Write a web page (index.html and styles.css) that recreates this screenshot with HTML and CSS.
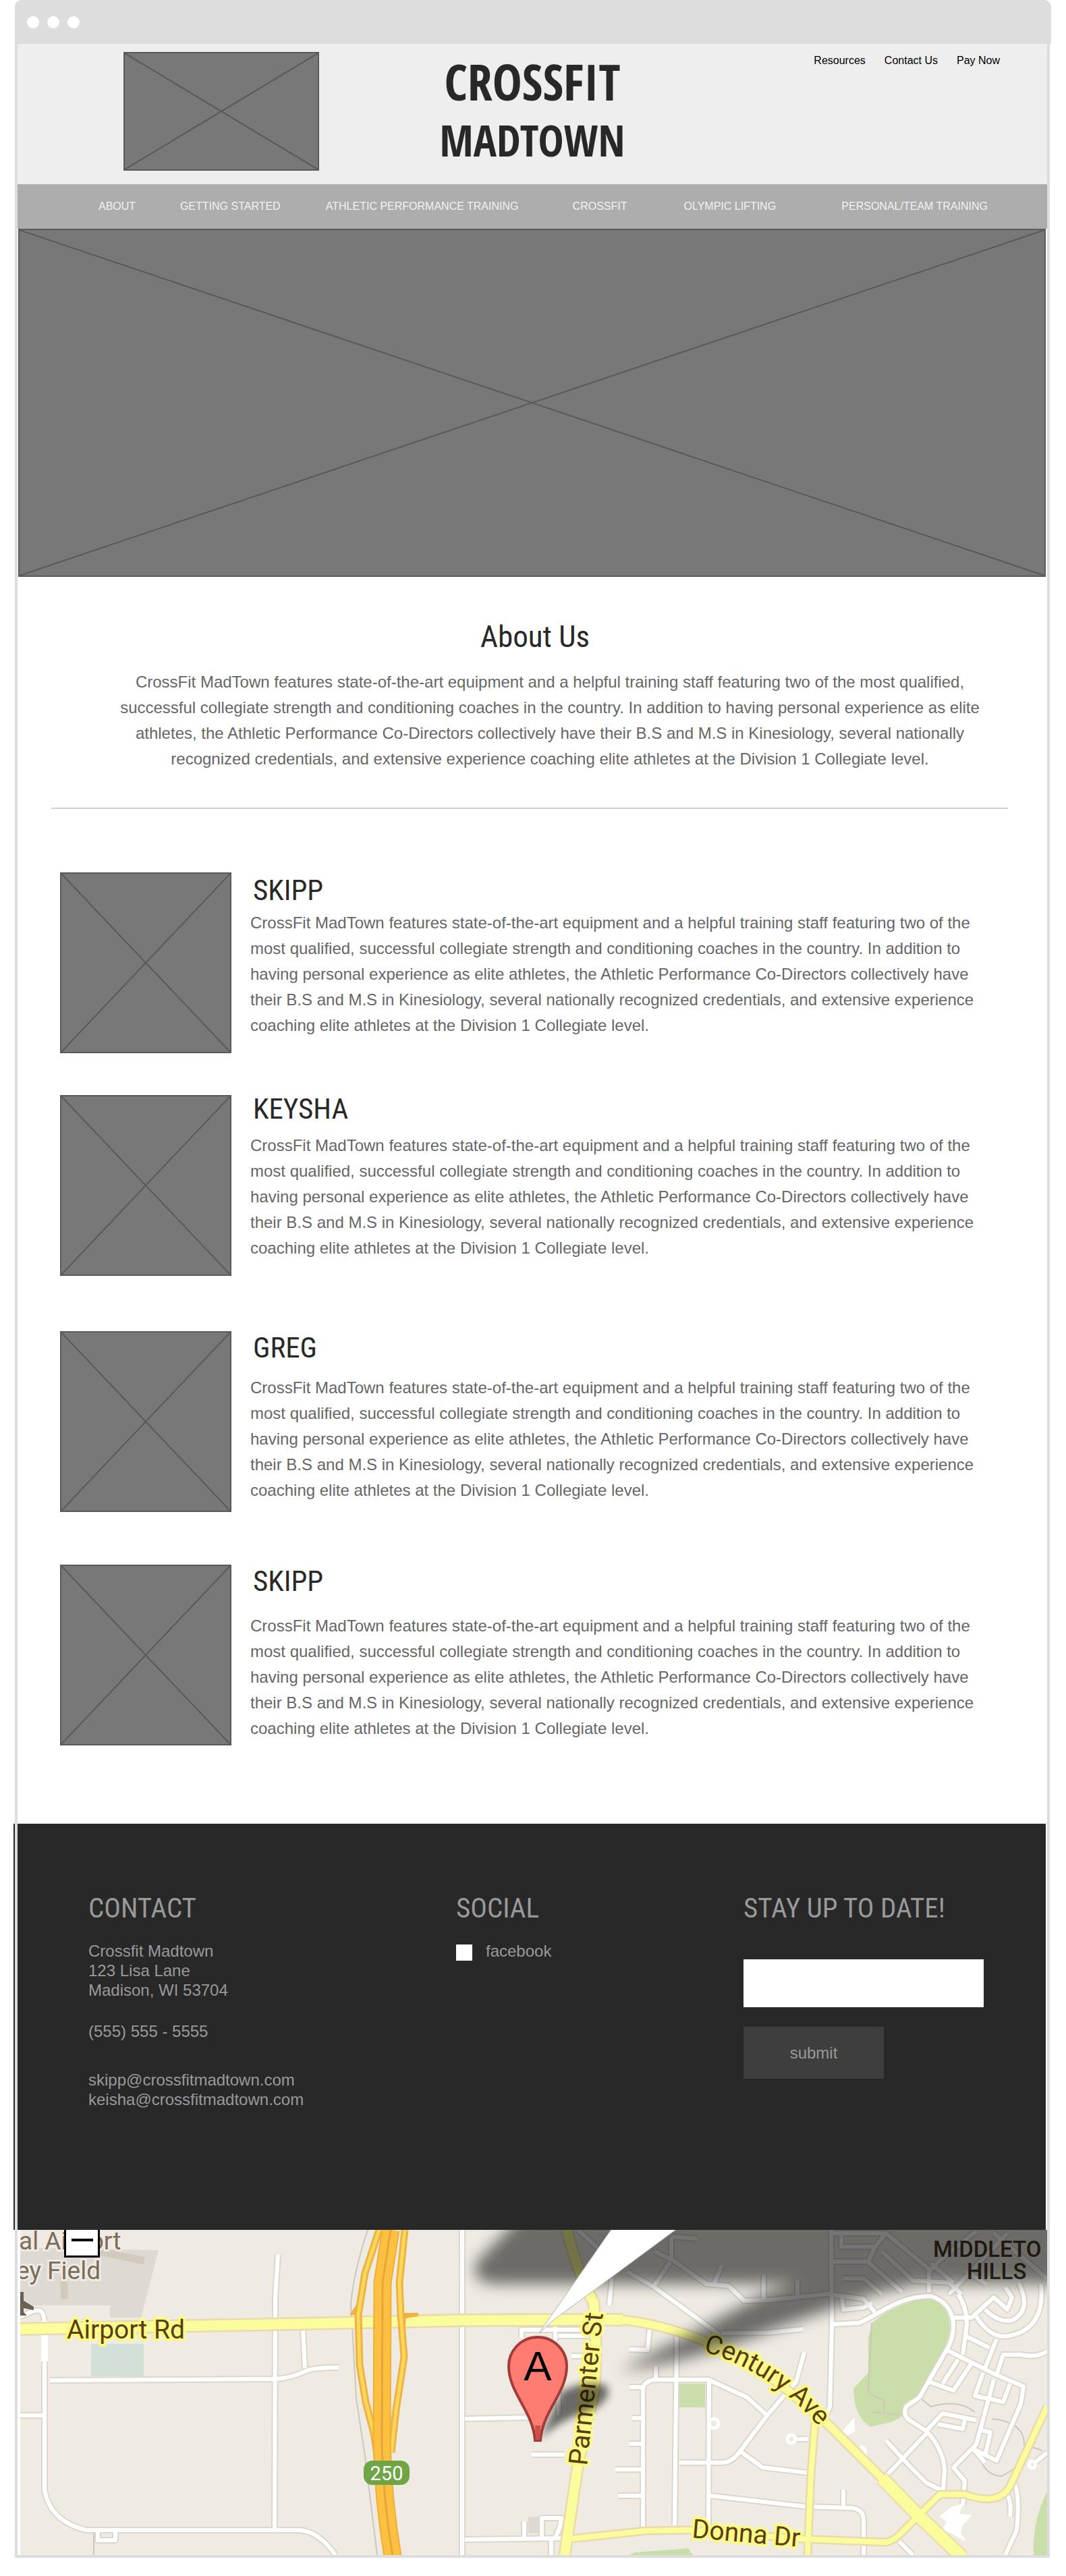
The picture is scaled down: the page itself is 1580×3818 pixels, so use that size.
FILE: index.html
```html
<!DOCTYPE html>
<html lang="en">
<head>
<meta charset="utf-8">
<meta name="viewport" content="width=device-width, initial-scale=1">
<title>CrossFit Madtown – About Us</title>
<link rel="stylesheet" href="styles.css">
</head>
<body>
<div class="window">
  <div class="chrome"><span class="dot"></span><span class="dot"></span><span class="dot"></span></div>
  <div class="frame">
    <header class="header">
      <svg class="placeholder header-image" viewBox="0 0 100 100" preserveAspectRatio="none" aria-hidden="true"><path d="M0 0L100 100M100 0L0 100"/></svg>
      <div class="logo"><span>CROSSFIT</span><span class="logo-second">MADTOWN</span></div>
      <nav class="top-links">
        <a href="#resources">Resources</a>
        <a href="#contact">Contact Us</a>
        <a href="#pay">Pay Now</a>
      </nav>
    </header>
    <nav class="main-nav">
      <a href="#about">ABOUT</a>
      <a href="#start">GETTING STARTED</a>
      <a href="#athletic">ATHLETIC PERFORMANCE TRAINING</a>
      <a href="#crossfit">CROSSFIT</a>
      <a href="#lifting">OLYMPIC LIFTING</a>
      <a href="#personal">PERSONAL/TEAM TRAINING</a>
    </nav>
    <svg class="placeholder hero" viewBox="0 0 100 100" preserveAspectRatio="none" aria-hidden="true"><path d="M0 0L100 100M100 0L0 100"/></svg>

    <main>
      <section class="about" id="about">
        <h1 class="about-title">About Us</h1>
        <p class="about-text">CrossFit MadTown features state-of-the-art equipment and a helpful training staff featuring two of the most qualified, successful collegiate strength and conditioning coaches in the country. In addition to having personal experience as elite athletes, the Athletic Performance Co-Directors collectively have their B.S and M.S in Kinesiology, several nationally recognized credentials, and extensive experience coaching elite athletes at the Division 1 Collegiate level.</p>
      </section>
      <hr class="rule">
      <section class="team">
        <article class="member">
          <svg class="placeholder portrait" viewBox="0 0 100 100" preserveAspectRatio="none" aria-hidden="true"><path d="M0 0L100 100M100 0L0 100"/></svg>
          <div class="bio">
            <h2 class="name">SKIPP</h2>
            <p>CrossFit MadTown features state-of-the-art equipment and a helpful training staff featuring two of the most qualified, successful collegiate strength and conditioning coaches in the country. In addition to having personal experience as elite athletes, the Athletic Performance Co-Directors collectively have their B.S and M.S in Kinesiology, several nationally recognized credentials, and extensive experience coaching elite athletes at the Division 1 Collegiate level.</p>
          </div>
        </article>
        <article class="member member-raised">
          <svg class="placeholder portrait" viewBox="0 0 100 100" preserveAspectRatio="none" aria-hidden="true"><path d="M0 0L100 100M100 0L0 100"/></svg>
          <div class="bio">
            <h2 class="name">KEYSHA</h2>
            <p>CrossFit MadTown features state-of-the-art equipment and a helpful training staff featuring two of the most qualified, successful collegiate strength and conditioning coaches in the country. In addition to having personal experience as elite athletes, the Athletic Performance Co-Directors collectively have their B.S and M.S in Kinesiology, several nationally recognized credentials, and extensive experience coaching elite athletes at the Division 1 Collegiate level.</p>
          </div>
        </article>
        <article class="member member-open">
          <svg class="placeholder portrait" viewBox="0 0 100 100" preserveAspectRatio="none" aria-hidden="true"><path d="M0 0L100 100M100 0L0 100"/></svg>
          <div class="bio">
            <h2 class="name">GREG</h2>
            <p>CrossFit MadTown features state-of-the-art equipment and a helpful training staff featuring two of the most qualified, successful collegiate strength and conditioning coaches in the country. In addition to having personal experience as elite athletes, the Athletic Performance Co-Directors collectively have their B.S and M.S in Kinesiology, several nationally recognized credentials, and extensive experience coaching elite athletes at the Division 1 Collegiate level.</p>
          </div>
        </article>
        <article class="member member-wide">
          <svg class="placeholder portrait" viewBox="0 0 100 100" preserveAspectRatio="none" aria-hidden="true"><path d="M0 0L100 100M100 0L0 100"/></svg>
          <div class="bio">
            <h2 class="name">SKIPP</h2>
            <p>CrossFit MadTown features state-of-the-art equipment and a helpful training staff featuring two of the most qualified, successful collegiate strength and conditioning coaches in the country. In addition to having personal experience as elite athletes, the Athletic Performance Co-Directors collectively have their B.S and M.S in Kinesiology, several nationally recognized credentials, and extensive experience coaching elite athletes at the Division 1 Collegiate level.</p>
          </div>
        </article>
      </section>
    </main>

    <footer class="footer" id="contact">
      <section>
        <h2 class="footer-title">CONTACT</h2>
        <address class="contact">
          <p>Crossfit Madtown<br>123 Lisa Lane<br>Madison, WI 53704</p>
          <p class="phone">(555) 555 - 5555</p>
          <p><a href="mailto:skipp@crossfitmadtown.com">skipp@crossfitmadtown.com</a><br><a href="mailto:keisha@crossfitmadtown.com">keisha@crossfitmadtown.com</a></p>
        </address>
      </section>
      <section>
        <h2 class="footer-title">SOCIAL</h2>
        <a class="social" href="#facebook"><span class="social-icon"></span>facebook</a>
      </section>
      <form class="signup">
        <h2 class="footer-title"><label for="email">STAY UP TO DATE!</label></h2>
        <input class="field" id="email" type="email">
        <button class="submit" type="button">submit</button>
      </form>
    </footer>

    <div class="map">
      <svg class="map-art" viewBox="0 0 1522 482" role="img" aria-label="Map of the gym on Parmenter St">
        <defs>
          <filter id="soft" x="-10%" y="-30%" width="120%" height="160%"><feGaussianBlur stdDeviation="11"/></filter>
          <filter id="soft-pin" x="-30%" y="-30%" width="160%" height="160%"><feGaussianBlur stdDeviation="6"/></filter>
          <g id="streets">
            <path d="M0 128C10 127 20 116 30 120Q37 124 36 150V385Q44 432 98 445H415Q444 448 467 482M382 37L378 100L377 445M44 223L378 221Q400 220 424 209Q435 204 472 204M419 147L422 205M0 275H36M655 0V482M659 280L760 278M659 459L803 457M115 447V460H141V447"/>
            <path d="M747 432V457M773 457V427H802L800 440L793 457M787 458V482M758 333H807M743 160V148H843M793 138V165M797 157H843M817 187H840M798 238V275M873 112L877 72M933 145L930 178L903 177M973 158L970 438M923 442V235Q925 224 940 222H1020L1077 248L1107 275L1067 328Q1055 345 1040 345H977M1021 225L1020 438M942 202V222M903 233H923M907 279H923M903 317H923M882 355H920M886 394H920M1023 394L1163 410L1230 412Q1250 413 1250 430V482M1220 385V412"/>
            <path d="M827 0L857 28M900 62L940 85L1036 155M1040 153L1110 152L1160 147M940 32L967 45L1017 80L1050 83L1073 105L1110 104L1197 95L1250 102L1267 122M965 12V45M965 10L1003 13M963 48L940 82M1040 53L1028 80M1102 67V102M1152 75V102"/>
            <path d="M1202 0L1203 142L1200 262L1193 278M1107 275L1150 225L1162 182M1067 328L1100 352L1167 360M1143 310H1167"/>
            <path d="M1203 140L1243 138C1275 125 1300 98 1350 98Q1380 108 1383 138Q1384 160 1373 178L1333 248L1313 262Q1308 275 1318 282L1343 298Q1368 325 1370 355L1368 385"/>
            <path d="M1203 5H1283L1347 58V92M1217 5V25H1267L1283 5M1267 25L1257 47H1203M1257 48L1307 92M1277 32L1323 75L1377 78L1395 95M1220 72H1250L1277 95M1217 95L1220 118L1250 115L1263 108M1347 62L1363 45L1417 2M1377 95L1463 5M1443 5L1522 72M1383 78L1350 50M1400 60L1432 80"/>
            <path d="M1390 95Q1403 115 1403 140L1397 185M1383 130H1410L1443 100L1463 118L1470 100L1460 85M1430 118Q1450 138 1470 134Q1500 120 1480 78M1417 128Q1435 158 1460 158Q1520 150 1513 80M1403 158L1437 175M1447 162L1430 205M1373 178L1447 215L1487 232L1483 258L1447 342L1413 325M1447 215L1457 185L1483 185Q1505 190 1522 180M1443 222L1417 318L1383 352M1390 192L1367 228M1410 198L1383 238L1347 225M1427 212L1415 246L1457 255L1467 228"/>
            <path d="M1343 298L1367 272L1417 282M1360 288L1397 295L1400 282M1343 302L1283 365M1283 312L1320 352L1343 375L1370 388M1383 352L1400 372L1397 408M1425 297L1438 300L1430 335M1413 325L1430 345M1473 375Q1482 390 1477 445L1460 482M1460 388Q1470 400 1467 425M1303 462L1323 482M1500 348L1522 330"/>
          </g>
          <g id="avenues">
            <path stroke-width="15" d="M0 147L378 140L656 134L893 133"/>
            <path stroke-width="14" d="M810 0Q825 60 850 108Q856 180 850 240L827 345L807 482"/>
            <path stroke-width="11" d="M885 133Q945 137 1020 167Q1100 205 1150 248L1197 288L1277 368L1333 425L1397 486"/>
            <path stroke-width="18" d="M1277 368L1333 425L1397 486"/>
            <path stroke-width="8" d="M815 458L927 446L993 445L1157 458L1283 463Q1295 460 1303 452L1363 392L1400 392Q1450 410 1467 380L1522 262M1178 285L1172 362L1167 482"/>
          </g>
        </defs>
        <rect width="1522" height="482" fill="#efebe3"/>
        <g fill="#dedad3"><path d="M0 26L205 30L179 130H133V112H0Z"/><rect x="753" y="425" width="20" height="25"/></g>
        <path d="M118 32L184 46M64 70L66 102" fill="none" stroke="#d2cabc" stroke-width="11"/>
        <rect x="105" y="169" width="78" height="48" fill="#d3e0d8"/>
        <g fill="#c9dea9">
          <path d="M1263 138C1280 122 1317 103 1350 101Q1377 112 1378 145Q1375 175 1343 228Q1320 275 1290 285L1260 292Q1235 275 1235 235L1257 212V160Z"/>
          <rect x="977" y="228" width="38" height="35"/>
          <path d="M903 482L910 478L990 472L997 482ZM1522 388Q1500 430 1502 482H1522Z"/>
        </g>
        <path d="M1262 138L1257 235Q1255 245 1280 252V270M1263 270L1305 274M1335 250L1350 262Q1390 250 1415 270M1440 280Q1490 285 1488 320M1425 345Q1435 365 1455 365L1480 350M1500 322L1515 327M515 0Q495 60 490 109L498 250L511 335L529 482M109 448V482" fill="none" stroke="#cfc6be" stroke-width="2"/>
        <use href="#streets" fill="none" stroke="#dcd6cd" stroke-width="10" stroke-linejoin="round"/>
        <use href="#streets" fill="none" stroke="#fff" stroke-width="6" stroke-linejoin="round"/>
        <path d="M36 135V195" fill="none" stroke="#fff" stroke-width="10"/>
        <path d="M1365 425L1380 412L1395 408L1390 422L1408 424L1395 438L1392 450L1400 460L1380 448L1368 445L1375 432ZM1217 302L1235 282L1236 298L1222 304Z" fill="#fff" stroke="#fff" stroke-width="3"/>
        <g fill="#efebe3" stroke="#fff" stroke-width="5"><circle cx="1028" cy="287" r="7"/><circle cx="1143" cy="310" r="6"/><circle cx="1500" cy="348" r="5"/><path d="M1245 320L1252 325V334"/></g>
        <g fill="none" stroke-linejoin="round">
          <g stroke="#ead9ae">
            <path stroke-width="20" d="M0 147L378 140L656 134L893 133"/>
            <path stroke-width="19" d="M810 0Q825 60 850 108Q856 180 850 240L827 345L807 482"/>
            <path stroke-width="16" d="M885 133Q945 137 1020 167Q1100 205 1150 248L1197 288L1277 368"/>
            <path stroke-width="22" d="M1277 368L1333 425L1397 486"/>
            <path stroke-width="13" d="M815 458L927 446L993 445L1157 458L1283 463Q1295 460 1303 452L1363 392L1400 392Q1450 410 1467 380L1522 262M1178 285L1172 362L1167 482"/>
          </g>
          <use href="#avenues" stroke="#fbfd9d"/>
          <g>
            <path stroke="#eeb342" stroke-width="11" d="M532 0L511 64L501 126L503 200L512 255L524 301L530 340M570 0L562 78L564 126L569 188L557 267L550 330"/>
            <path fill="#eeb342" d="M488 126L500 108L506 126ZM560 123H590V128L572 131L570 148H560Z"/>
            <path stroke="#fdd75c" stroke-width="5" d="M532 0L511 64L501 126L503 200L512 255L524 301L530 340M570 0L562 78L564 126L569 188L557 267L550 330"/>
          </g>
          <path stroke="#eeae38" stroke-width="27" d="M549 0L537 78L536 318Q538 400 552 484"/>
          <path stroke="#fdc142" stroke-width="23" d="M549 0L537 78L536 318Q538 400 552 484"/>
          <path stroke="#e8a63a" stroke-width="3" d="M549 0L537 78L536 318Q538 400 552 484"/>
        </g>
        <rect x="509" y="342" width="68" height="36" rx="13" fill="#6fa544"/>
        <text x="543" y="371" class="map-shield">250</text>
        <path d="M0 92H5V105L20 114V119L5 116V122L10 127H0Z" fill="#6a6153"/>
        <g class="map-area">
          <text x="-2" y="29">al Airport</text>
          <text x="-6" y="73">ey Field</text>
        </g>
        <g class="map-label">
          <text x="69" y="161">Airport Rd</text>
          <text transform="translate(840 350) rotate(-84)">Parmenter St</text>
          <path id="century" d="M1012 180Q1125 213 1200 312" fill="none" stroke="none"/>
          <text><textPath href="#century">Century Ave</textPath></text>
          <text transform="translate(995 456) rotate(5)">Donna Dr</text>
        </g>
        <g class="map-district">
          <text x="1353" y="40">MIDDLETO</text>
          <text x="1403" y="73">HILLS</text>
        </g>
        <path d="M780 -60L676 48Q665 80 710 80H1150L1100 96L1010 145L890 208Q1000 196 1130 142L1270 94L1330 80H1640V-60Z" opacity=".54" filter="url(#soft)"/>
        <path d="M770 311L802 240Q835 222 868 230Q880 248 850 266Q800 280 770 311Z" opacity=".55" filter="url(#soft-pin)"/>
        <path d="M769 153L877 -2H974L790 134Z" fill="#fff" stroke="#b3b3b3"/>
        <path d="M763 312C760 268 724 242 724 202A43 43 0 0 1 810 202C810 242 774 268 771 312Z" fill="#fe7c72" stroke="#a23c38" stroke-width="4"/>
        <path d="M764 311L763 290H771L770 311Z" fill="#c9504c"/>
        <text x="767" y="223" class="map-letter">A</text>
      </svg>
      <button class="zoom-out" type="button" aria-label="Zoom out"></button>
    </div>
  </div>
</div>
</body>
</html>
```
FILE: styles.css
```css
* {
  box-sizing: border-box;
}

body {
  margin: 0;
  background: #fff;
  color: #666;
  font: 24px/38px "Liberation Sans", Arial, sans-serif;
}

h1, h2, p {
  margin: 0;
}

a {
  color: inherit;
  text-decoration: none;
}

.window {
  padding: 0 22px 27px;
}

.chrome {
  display: flex;
  align-items: center;
  gap: 12px;
  height: 65px;
  padding-left: 18px;
  background: #ddd;
  border-radius: 10px 10px 0 0;
}

.dot {
  width: 18px;
  height: 18px;
  border-radius: 50%;
  background: #fff;
}

.frame {
  margin-right: 2px;
  border: solid #ddd;
  border-width: 0 4px 4px;
}

/* Crossed boxes that stand in for pictures */
.placeholder {
  display: block;
  background: #787878;
  border: 2px solid #5a5a5a;
}

.placeholder path {
  fill: none;
  stroke: #5a5a5a;
  stroke-width: 2px;
  vector-effect: non-scaling-stroke;
}

.header {
  display: grid;
  grid-template-columns: 1fr auto 1fr;
  padding: 12px 0 20px;
  background: #eee;
}

.header-image {
  width: 290px;
  height: 176px;
  margin-left: 157px;
}

.logo {
  display: flex;
  flex-direction: column;
  align-items: center;
  color: #282828;
  font: 700 74px/87px "Open Sans Condensed", "Roboto Condensed", sans-serif;
}

.logo-second {
  font-size: 64px;
}

.top-links {
  display: flex;
  justify-content: flex-end;
  gap: 28px;
  padding: 3px 70px 0 0;
  color: #000;
  font-size: 16px;
  line-height: 20px;
}

.main-nav {
  display: grid;
  grid-template-columns: 121fr 216fr 366fr 165fr 234fr 216fr;
  align-items: center;
  height: 66px;
  padding: 0 88px 0 120px;
  background: #adadad;
  color: #f2f2f2;
  font-size: 16px;
  line-height: 20px;
  white-space: nowrap;
}

.hero {
  width: calc(100% - 3px);
  height: 516px;
  margin-left: 1px;
}

.about {
  padding: 61px 87px 53px 139px;
  text-align: center;
}

.about-title {
  margin: 0 48px 20px 4px;
  color: #282828;
  font: 400 45px/56px "Roboto Condensed", sans-serif;
}

.rule {
  height: 2px;
  margin: 0 58px 0 50px;
  border: 0;
  background: #d0d0d0;
}

.team {
  padding: 94px 91px 116px 63px;
}

.member {
  display: flex;
  gap: 28px;
  margin-bottom: 62px;
}

.portrait {
  flex: none;
  width: 254px;
  height: 268px;
}

.name {
  margin: 2px 0 6px;
  padding-left: 4px;
  color: #282828;
  font: 400 43px/48px "Roboto Condensed", sans-serif;
}

.member-raised {
  margin-bottom: 82px;
}

.member-raised .name {
  margin: -4px 0 12px;
}

.member-open {
  margin-bottom: 78px;
}

.member-open .name {
  margin: 0 0 17px;
}

.member-wide {
  margin-bottom: 0;
}

.member-wide .name {
  margin: 0 0 24px;
}

.footer {
  position: relative;
  display: grid;
  grid-template-columns: 545fr 426fr 356fr;
  margin-right: 2px;
  padding: 101px 92px 179px 105px;
  background: #282828;
  color: #999;
  line-height: 29px;
}

/* Thin sliver of the footer showing outside the window frame */
.footer::before {
  content: "";
  position: absolute;
  top: 0;
  bottom: 0;
  left: -6px;
  width: 2px;
  background: #282828;
}

.footer-title {
  margin-bottom: 25px;
  font: 400 41px/48px "Roboto Condensed", sans-serif;
  white-space: nowrap;
}

.contact {
  font-style: normal;
}

.phone {
  margin: 32px 0 43px;
}

.social {
  display: flex;
  align-items: flex-end;
  gap: 20px;
}

.social-icon {
  width: 24px;
  height: 24px;
  background: #fff;
}

.signup {
  display: flex;
  flex-direction: column;
  align-items: flex-start;
}

.field {
  width: 100%;
  height: 71px;
  margin: 27px 0 29px;
  padding: 0 16px;
  border: 0;
  background: #fff;
  font: inherit;
}

.submit {
  width: 208px;
  height: 77px;
  border: 0;
  background: #3e3e3e;
  color: #999;
  font: inherit;
}

.map {
  position: relative;
  margin-left: 4px;
  overflow: hidden;
}

.map-art {
  display: block;
  width: 100%;
  height: auto;
}

.map-label {
  fill: #5a3d12;
  stroke: #fbfb84;
  stroke-width: 8px;
  stroke-linejoin: round;
  paint-order: stroke;
  font: 400 39px Roboto, sans-serif;
}

.map-area {
  fill: #7b6d5b;
  stroke: #efebe3;
  stroke-width: 6px;
  paint-order: stroke;
  font: 400 37px Roboto, sans-serif;
}

.map-district {
  fill: #453624;
  font: 500 33px Roboto, sans-serif;
}

.map-shield {
  fill: #fff;
  font: 400 29px Roboto, sans-serif;
  text-anchor: middle;
}

.map-letter {
  fill: #000;
  font: 400 62px "Liberation Sans", Arial, sans-serif;
  text-anchor: middle;
}

.zoom-out {
  position: absolute;
  top: 0;
  left: 65px;
  width: 53px;
  height: 41px;
  padding: 0 0 9px;
  border: 3px solid #000;
  border-top: 0;
  background: #fff;
}

.zoom-out::before {
  content: "";
  display: block;
  width: 32px;
  height: 4px;
  margin: 0 auto;
  background: #000;
}
```
